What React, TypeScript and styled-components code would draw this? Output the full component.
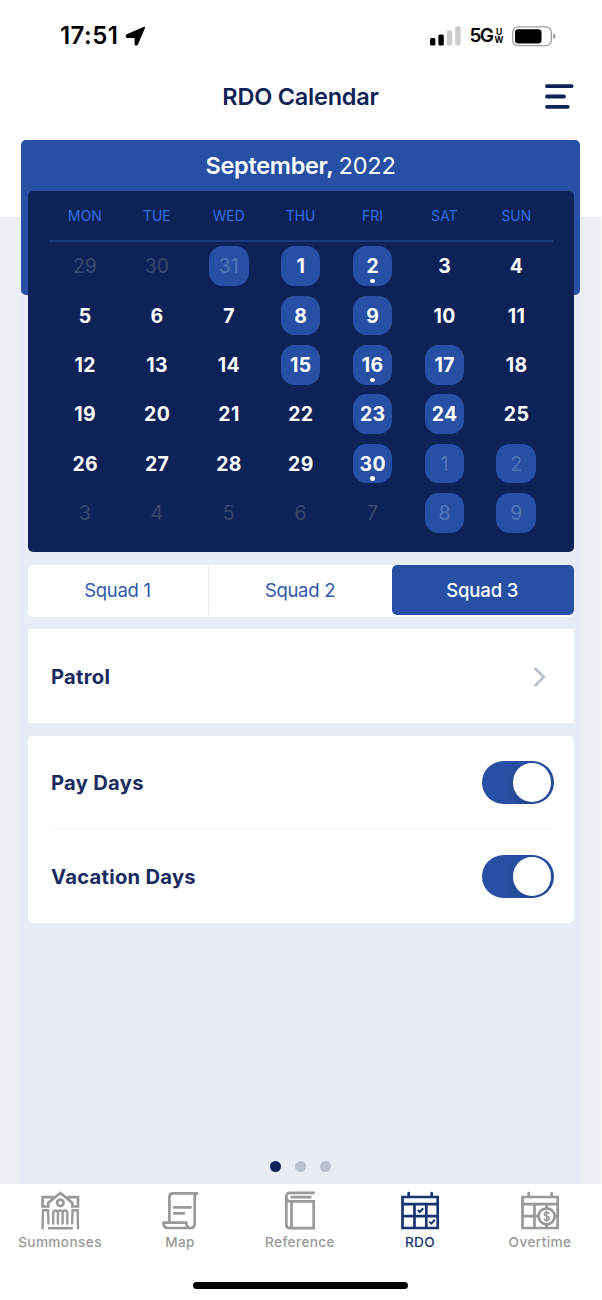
import React from "react";
import styled, { createGlobalStyle } from "styled-components";

const navy = "#0d2257";
const blue = "#274fa3";

const Global = createGlobalStyle`
  *, *::before, *::after { box-sizing: border-box; }
  body { margin: 0; background: #fff; font-family: Inter, "Liberation Sans", sans-serif; }
  button { font: inherit; border: 0; background: none; padding: 0; }
`;

const Phone = styled.div`
  width: 601px;
  height: 1300px;
  display: flex;
  flex-direction: column;
  background: linear-gradient(#fff 217.5px, #ebeff4 217.5px);
`;

const StatusBar = styled.header`
  height: 70px;
  padding: 2px 45.5px 0 60px;
  display: flex;
  align-items: center;
  justify-content: space-between;
  color: #000;
`;

const StatusGroup = styled.div<{ $gap: number }>`
  display: flex;
  align-items: center;
  gap: ${(p) => p.$gap}px;
`;

const Clock = styled.span`
  font-size: 24px;
  font-weight: 600;
  letter-spacing: 0.45px;
  line-height: 28px;
`;

const Network = styled.span`
  display: flex;
  align-items: center;
  gap: 2.5px;
  font-size: 19px;
  font-weight: 600;
  letter-spacing: -1.8px;
  line-height: 24px;
`;

const NetworkSuffix = styled.span`
  display: flex;
  flex-direction: column;
  align-items: center;
  font-size: 8.6px;
  font-weight: 700;
  letter-spacing: 0;
  line-height: 8.5px;
`;

const TitleBar = styled.div`
  height: 70px;
  padding: 0 27px 16px 28px;
  display: grid;
  grid-template-columns: 28px 1fr 29px;
  align-items: center;
`;

const Title = styled.h1`
  grid-column: 2;
  margin: 0;
  text-align: center;
  font-size: 23.5px;
  font-weight: 600;
  line-height: 30px;
  letter-spacing: -0.22px;
  color: ${navy};
`;

const MenuButton = styled.button`
  display: flex;
  height: 26px;
`;

const Content = styled.main`
  flex: 1;
  margin: 0 21px;
  display: flex;
  flex-direction: column;
  background: linear-gradient(transparent 100px, #e8ecf5 100px);
`;

const Calendar = styled.section`
  display: grid;
  grid-template-columns: 1fr;
`;

const MonthPanel = styled.div`
  grid-area: 1 / 1;
  height: 155px;
  border-radius: 5px;
  background: ${blue};
`;

const Month = styled.h2`
  margin: 0;
  text-align: center;
  color: #fff;
  font-size: 23.5px;
  font-weight: 600;
  line-height: 52px;
  letter-spacing: -0.3px;
`;

const Year = styled.span`
  font-weight: 400;
  letter-spacing: -0.2px;
`;

const DayCard = styled.div`
  grid-area: 1 / 1;
  height: 361px;
  margin: 51px 6.5px 0 7px;
  padding: 0 21px;
  border-radius: 5px;
  background: ${navy};
`;

const Week = styled.div`
  display: grid;
  grid-template-columns: repeat(7, 71.9px);
`;

const WeekdayRow = styled(Week)`
  height: 51px;
  border-bottom: 2px solid #173a82;
`;

const Weekday = styled.span`
  text-align: center;
  color: #3370e6;
  font-size: 13.8px;
  line-height: 50px;
  letter-spacing: 0.1px;
`;

const Weeks = styled.div`
  padding-top: 4.2px;
`;

const Cell = styled.div`
  display: flex;
  justify-content: center;
  height: 49.4px;
`;

const Day = styled.span<{ $off?: boolean; $muted?: boolean }>`
  position: relative;
  width: 39.6px;
  height: 39.6px;
  border-radius: 13.5px;
  background: ${(p) => (p.$off ? blue : "transparent")};
  color: ${(p) => (p.$muted ? (p.$off ? "#5275b9" : "#39496f") : "#fff")};
  font-size: 19.4px;
  font-weight: ${(p) => (p.$muted ? 400 : 700)};
  line-height: 41.4px;
  text-align: center;
  text-indent: ${(p) => (p.$muted ? 0 : 0.5)}px;
  letter-spacing: ${(p) => (p.$muted ? 0 : 0.4)}px;
`;

const PayDot = styled.i`
  position: absolute;
  left: 17.4px;
  bottom: 2.4px;
  width: 4.6px;
  height: 4.6px;
  border-radius: 50%;
  background: #fff;
`;

const Squads = styled.div`
  margin: 12.5px 6.5px 0 7px;
  height: 52px;
  padding-bottom: 1.5px;
  display: grid;
  grid-template-columns: 181px 183px 1fr;
  border-radius: 5px;
  background: #fff;
`;

const Squad = styled.button<{ $active?: boolean; $divider?: boolean }>`
  padding-right: 1px;
  font-size: 18.5px;
  font-weight: ${(p) => (p.$active ? 500 : 400)};
  letter-spacing: ${(p) => (p.$active ? -0.15 : -0.3)}px;
  color: ${(p) => (p.$active ? "#fff" : "#3159a9")};
  background: ${(p) => (p.$active ? blue : "transparent")};
  border-radius: ${(p) => (p.$active ? "5px" : "0")};
  border-right: ${(p) => (p.$divider ? "1px solid #e5ebf5" : "0")};
`;

const Card = styled.section<{ $rounded?: boolean }>`
  margin: 12.7px 6.5px 0 7px;
  padding: 0 20px 0 23px;
  border-radius: ${(p) => (p.$rounded ? "5px" : "0")};
  background: #fff;
`;

const Row = styled.div<{ $line?: boolean }>`
  height: ${(p) => (p.$line ? 93.5 : 93.7)}px;
  padding-top: 1.6px;
  display: flex;
  align-items: center;
  justify-content: space-between;
  border-bottom: ${(p) => (p.$line ? "1px solid #f5f6f9" : "0")};
`;

const RowLabel = styled.span`
  font-size: 20.2px;
  font-weight: 700;
  letter-spacing: 0.27px;
  color: #172b5e;
`;

const Chevron = styled.svg`
  margin-right: 7.5px;
`;

const Toggle = styled.button`
  width: 71.5px;
  height: 43.5px;
  padding: 0 2.5px;
  display: flex;
  align-items: center;
  justify-content: flex-end;
  border-radius: 22px;
  overflow: hidden;
  background: ${blue};
`;

const Knob = styled.span`
  width: 38.5px;
  height: 38.5px;
  border-radius: 50%;
  background: #fff;
  box-shadow: 0 3px 8px rgba(0, 0, 0, 0.15);
`;

const Pager = styled.div`
  margin-top: auto;
  padding: 0 0 12.5px 0;
  display: flex;
  justify-content: center;
  gap: 14px;
`;

const PageDot = styled.i<{ $active?: boolean }>`
  width: 10.8px;
  height: 10.8px;
  border-radius: 50%;
  background: ${(p) => (p.$active ? navy : "#bac2cf")};
`;

const TabBar = styled.nav`
  height: 116px;
  background: #fff;
  display: flex;
  flex-direction: column;
`;

const Tabs = styled.div`
  height: 98px;
  display: grid;
  grid-template-columns: repeat(5, 120px);
`;

const Tab = styled.a<{ $active?: boolean }>`
  padding-top: 6px;
  display: flex;
  flex-direction: column;
  align-items: center;
  color: ${(p) => (p.$active ? "#17356f" : "#999")};
`;

const TabLabel = styled.span`
  margin-top: 3.4px;
  font-size: 13.6px;
  font-weight: 500;
  line-height: 18px;
  letter-spacing: 0.4px;
`;

const HomeIndicator = styled.div`
  align-self: center;
  width: 215px;
  height: 7px;
  border-radius: 4px;
  background: #000;
`;

const TabIcon = ({ children }: { children: React.ReactNode }) => (
  <svg width="40" height="40" viewBox="0 0 40 40" fill="none" stroke="currentColor" strokeWidth="2.7">
    {children}
  </svg>
);

const CourtIcon = () => (
  <TabIcon>
    <path d="M13.5 7.2H2.6v9.3h5.6v-3.6L20.3 3l12.1 9.9v3.6H38V7.2H27.1" />
    <circle cx="20.3" cy="12.8" r="3.2" />
    <path
      d="M2.6 38.2l.4-17.9h5l.5 13.2M38 38.2l-.4-17.9h-5l-.5 13.2M13.2 33.5v-10.6a2.35 2.35 0 0 1 4.7 0v10.6M17.9 33.5v-10.6a2.35 2.35 0 0 1 4.7 0v10.6M22.6 33.5v-10.6a2.35 2.35 0 0 1 4.7 0v10.6M9 38.3h23"
      strokeLinecap="round"
      strokeWidth="2.4"
    />
  </TabIcon>
);

const ScrollIcon = () => (
  <TabIcon>
    <path
      d="M9.4 31.5V7q0-3.7 3.7-3.7h24q-2.4 1.2-2.4 4v26.5q0 4.2-4.2 4.2H7.6q-3.9 0-4.2-5.3h23q.2 5.3 4 5.3M14.2 17.4H30.5M14.2 23.3h9.8"
      strokeLinecap="round"
      strokeLinejoin="round"
    />
  </TabIcon>
);

const BookIcon = () => (
  <TabIcon>
    <path d="M34.8 2.8H10Q6.3 2.8 6.3 7v27.5q0 3.7 3.7 3.7h23.7V11.3H10q-3.7 0-3.7-4.5M10.5 7.2h21M11.5 11.5v26.7" />
  </TabIcon>
);

const CalendarFrame = () => (
  <g strokeLinecap="round">
    <path d="M2.5 7h35.2v31H2.5zM2.5 14.2h35.2M8.7 7V3.2M31.7 7V3.2" />
  </g>
);

const ScheduleIcon = () => (
  <TabIcon>
    <CalendarFrame />
    <path d="M2.5 26.2h35.2M14.5 14v24M26.3 14v24" />
    <path d="M17.7 20l2 2 3.5-3.8M29.3 31.6l2 2 3.5-3.8" strokeWidth="2" />
  </TabIcon>
);

const OvertimeIcon = () => (
  <TabIcon>
    <CalendarFrame />
    <path d="M2.5 26.2h16M14.5 14v24M26.6 14v4M26.6 35v3M34.5 26.2h3" />
    <circle cx="26.6" cy="26.3" r="8" />
    <path
      d="M29 23.7q-.6-1.4-2.4-1.4-2.2 0-2.2 1.8 0 1.7 2.2 2.2 2.5.5 2.5 2.2 0 1.9-2.5 1.9-2 0-2.6-1.5M26.6 20.8v11"
      strokeWidth="1.6"
    />
  </TabIcon>
);

const weekdays = ["MON", "TUE", "WED", "THU", "FRI", "SAT", "SUN"];
const gridStart = 3;
const daysOff = new Set([2, 3, 4, 10, 11, 17, 18, 19, 25, 26, 32, 33, 34, 40, 41]);
const payDays = new Set([4, 18, 32]);

const days = Array.from({ length: 42 }, (_, i) => {
  const n = i - gridStart + 1;
  if (n < 1) return { label: n + 31, muted: true };
  if (n > 30) return { label: n - 30, muted: true };
  return { label: n, muted: false };
});

const tabs = [
  { label: "Summonses", icon: <CourtIcon /> },
  { label: "Map", icon: <ScrollIcon /> },
  { label: "Reference", icon: <BookIcon /> },
  { label: "RDO", icon: <ScheduleIcon />, active: true },
  { label: "Overtime", icon: <OvertimeIcon /> },
];

export default function App() {
  return (
    <Phone>
      <Global />
      <StatusBar>
        <StatusGroup $gap={7}>
          <Clock>17:51</Clock>
          <svg width="21" height="21" viewBox="0 0 21 21">
            <path
              d="M1.8 8.2 18.3.9q2.3-.8 1.6 1.3L13 18.2q-2.2 3.4-3.4-.2V12H2.4q-3.2-.9-.6-3.8z"
              fill="#000"
            />
          </svg>
        </StatusGroup>
        <StatusGroup $gap={8}>
          <svg width="31" height="20" viewBox="0 0 31 20">
            <rect x="0" y="12" width="5.4" height="7.5" rx="1.5" />
            <rect x="8.4" y="8.5" width="5.4" height="11" rx="1.5" />
            <rect x="16.8" y="4.5" width="5.4" height="15" rx="1.5" fill="#ccc" />
            <rect x="25.2" y="0.3" width="5.4" height="19.2" rx="1.5" fill="#ccc" />
          </svg>
          <Network>
            5G
            <NetworkSuffix>
              <span>U</span>
              <span>W</span>
            </NetworkSuffix>
          </Network>
          <svg width="44" height="21" viewBox="0 0 44 21">
            <rect x="0.7" y="0.9" width="38.6" height="18.8" rx="5.5" fill="none" stroke="#a0a0a0" strokeWidth="1.3" />
            <rect x="3" y="3.2" width="26.5" height="14.2" rx="3.2" />
            <path d="M41 7.2q2.6 1 2.6 3.1T41 13.4z" fill="#a0a0a0" />
          </svg>
        </StatusGroup>
      </StatusBar>
      <TitleBar>
        <Title>RDO Calendar</Title>
        <MenuButton aria-label="Menu">
          <svg width="29" height="26" viewBox="0 0 29 26" stroke={navy} strokeWidth="3.8" strokeLinecap="round">
            <path d="M2 2.2h24.6M2 12.5h17M2 22.8h20.8" />
          </svg>
        </MenuButton>
      </TitleBar>
      <Content>
        <Calendar>
          <MonthPanel>
            <Month>
              September, <Year>2022</Year>
            </Month>
          </MonthPanel>
          <DayCard>
            <WeekdayRow>
              {weekdays.map((d) => (
                <Weekday key={d}>{d}</Weekday>
              ))}
            </WeekdayRow>
            <Weeks>
              <Week>
                {days.map((d, i) => (
                  <Cell key={i}>
                    <Day $off={daysOff.has(i)} $muted={d.muted}>
                      {d.label}
                      {payDays.has(i) && !d.muted && <PayDot />}
                    </Day>
                  </Cell>
                ))}
              </Week>
            </Weeks>
          </DayCard>
        </Calendar>
        <Squads>
          <Squad $divider>Squad 1</Squad>
          <Squad>Squad 2</Squad>
          <Squad $active>Squad 3</Squad>
        </Squads>
        <Card>
          <Row>
            <RowLabel>Patrol</RowLabel>
            <Chevron width="13" height="20" viewBox="0 0 13 20" fill="none" stroke="#bac2cf" strokeWidth="2.7" strokeLinecap="round">
              <path d="M2.5 1.8l8.2 8.2-8.2 8.2" />
            </Chevron>
          </Row>
        </Card>
        <Card $rounded>
          <Row $line>
            <RowLabel>Pay Days</RowLabel>
            <Toggle aria-label="Pay Days">
              <Knob />
            </Toggle>
          </Row>
          <Row>
            <RowLabel>Vacation Days</RowLabel>
            <Toggle aria-label="Vacation Days">
              <Knob />
            </Toggle>
          </Row>
        </Card>
        <Pager>
          <PageDot $active />
          <PageDot />
          <PageDot />
        </Pager>
      </Content>
      <TabBar>
        <Tabs>
          {tabs.map((t) => (
            <Tab key={t.label} $active={t.active}>
              {t.icon}
              <TabLabel>{t.label}</TabLabel>
            </Tab>
          ))}
        </Tabs>
        <HomeIndicator />
      </TabBar>
    </Phone>
  );
}
